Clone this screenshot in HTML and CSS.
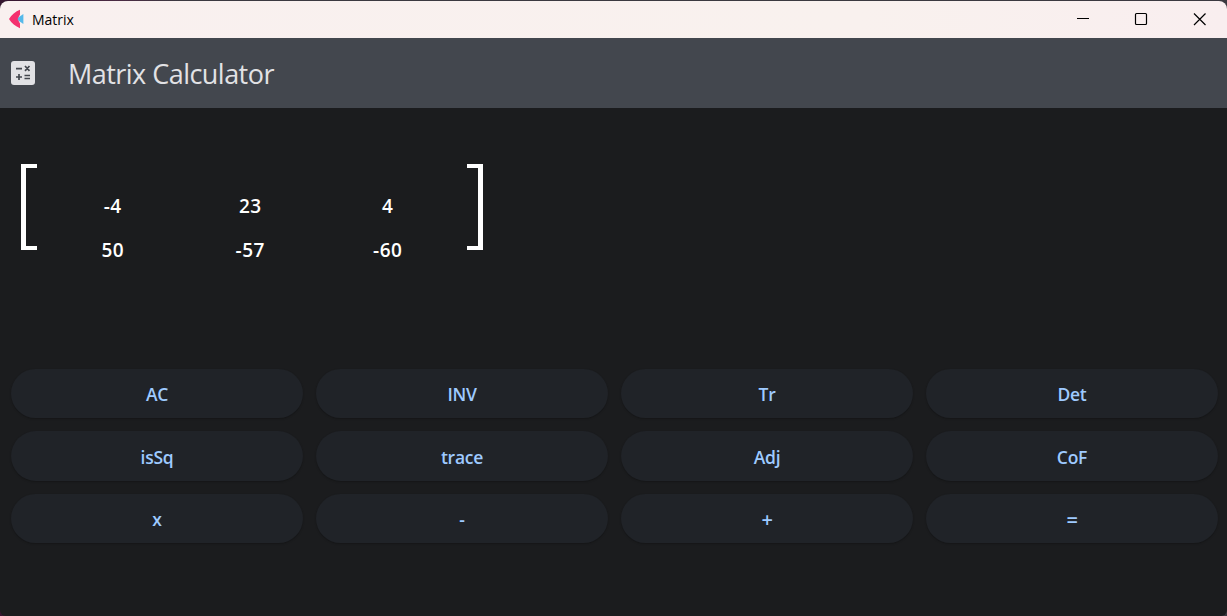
FILE: index.html
```html
<!DOCTYPE html>
<html lang="en">
<head>
<meta charset="utf-8">
<title>Matrix</title>
<link rel="stylesheet" href="styles.css">
</head>
<body>
<div class="window">
  <header class="titlebar">
    <svg class="logo" width="16" height="20" viewBox="0 0 16 20"><path d="M8 10 15.400 5v10z" fill="#55b9ea"/><path d="M12 .8v4.700L9.600 10l2.400 4.500v4.700C7.500 17.500 3.500 14 1 10 3.500 6 7.500 2.500 12 .8z" fill="#f4316f"/></svg>
    <span class="caption">Matrix</span>
    <div class="controls">
      <svg width="58" height="36" viewBox="0 0 58 36"><path d="M23 17.500h12"/></svg>
      <svg width="58" height="36" viewBox="0 0 58 36"><rect x="23.500" y="12.500" width="11" height="11" rx="1"/></svg>
      <svg width="58" height="36" viewBox="0 0 58 36"><path d="m24 12.500 11.500 11.500m0-11.500L24 24"/></svg>
    </div>
  </header>
  <div class="appbar">
    <svg class="calc" width="24" height="24" viewBox="0 0 24 24"><rect width="24" height="24" rx="3" fill="#e2e2e5"/><path d="M5 7.700h6M14 5l4.500 4.800m0-4.800L14 9.800M5 16h6M8 13v6M13.500 14.500H19M13.500 17.500H19" fill="none" stroke="#43474e" stroke-width="1.700"/></svg>
    <h1>Matrix Calculator</h1>
  </div>
  <main>
    <section class="matrix">
      <div class="bracket left"></div>
      <div class="cells">
        <span>-4</span><span>23</span><span>4</span>
        <span>50</span><span>-57</span><span>-60</span>
      </div>
      <div class="bracket right"></div>
    </section>
    <section class="keys">
      <button>AC</button><button>INV</button><button>Tr</button><button>Det</button>
      <button>isSq</button><button>trace</button><button>Adj</button><button>CoF</button>
      <button>x</button><button>-</button><button class="sign">+</button><button class="sign">=</button>
    </section>
  </main>
</div>
</body>
</html>
```
FILE: styles.css
```css
* { box-sizing: border-box; }
body {
  margin: 0;
  height: 616px;
  overflow: hidden;
  background: linear-gradient(90deg, #35152f 0, #4b2b43 120px, #3b3940 180px, #3b3940 100%);
  font-family: "Open Sans", "Noto Sans", sans-serif;
}
.window {
  height: 615px;
  margin-top: 1px;
  border-radius: 8px 8px 6px 6px;
  overflow: hidden;
  background: #1b1c1e;
}
.titlebar {
  display: flex;
  align-items: center;
  height: 37px;
  padding-left: 8px;
  background: linear-gradient(90deg, #f9f0ef, #f9f1ee 70%, #f9eeef);
  color: #000;
}
.logo { margin-top: -1px; }
.caption {
  margin-left: 8px;
  font-size: 14px;
}
.controls {
  display: flex;
  margin: -1px -1px 0 auto;
}
.controls svg {
  fill: none;
  stroke: #000;
  stroke-width: 1.200;
}
.appbar {
  display: flex;
  align-items: center;
  height: 70px;
  padding-left: 11px;
  background: #43474e;
}
h1 {
  margin: 2px 0 0 33px;
  color: #e2e2e5;
  font-size: 27px;
  font-weight: 400;
  line-height: 36px;
  letter-spacing: -0.53px;
}
.matrix {
  display: flex;
  height: 260.5px;
  padding: 56px 0 0 21px;
}
.bracket {
  width: 16px;
  height: 86px;
  border: 4px solid #fff;
}
.left { border-left-width: 5px; border-right: 0; }
.right { border-right-width: 5px; border-left: 0; }
.cells {
  display: grid;
  grid-template-columns: repeat(3, 137.5px);
  grid-auto-rows: 44px;
  width: 430px;
  padding: 20px 0 0 7px;
  color: #fff;
  font-size: 19px;
  font-weight: 650;
  line-height: 44px;
  letter-spacing: 0.5px;
  text-align: center;
}
.keys {
  display: grid;
  grid-template-columns: repeat(4, 292px);
  grid-auto-rows: 49.5px;
  gap: 13px;
  padding-left: 11px;
}
button {
  padding: 2px 0 0;
  border: 0;
  border-radius: 25px;
  background: #202328;
  box-shadow: 0 1px 2px rgba(0, 0, 0, .25);
  color: #9ecaff;
  font: 640 17.5px "Open Sans", "Noto Sans", sans-serif;
  letter-spacing: -0.25px;
}
.sign { font-size: 20px; }
```
